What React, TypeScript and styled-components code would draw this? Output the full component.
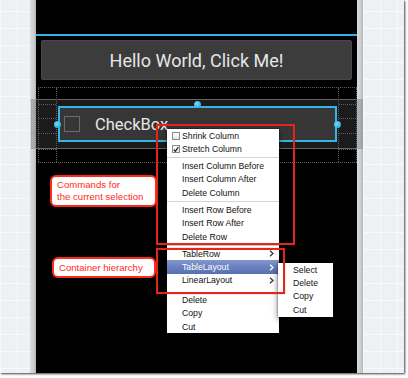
import React from "react";
import styled, { createGlobalStyle } from "styled-components";

const Global = createGlobalStyle`
  html, body { margin: 0; padding: 0; background: #ffffff; }
  #root { width: 408px; height: 378px; }
`;

const Frame = styled.div`
  position: relative;
  width: 404px;
  height: 373px;
  display: flex;
  box-shadow: 1px 1px 2px rgba(0, 0, 0, 0.75);
  overflow: hidden;
`;

const GridArea = styled.div<{ $w?: number }>`
  ${(p) => (p.$w ? `width: ${p.$w}px;` : "flex: 1;")}
  background-color: #edf1f4;
  background-image: linear-gradient(#f7f9fb 1px, transparent 1px),
    linear-gradient(90deg, #f7f9fb 1px, transparent 1px);
  background-size: 17px 17px;
  background-position: 0 -6px;
`;

const SideBar = styled.div`
  width: 6px;
  background: linear-gradient(90deg, #dadcde 0%, #cfd1d3 40%, #c4c6c8 80%, #a9abad 100%);
`;

const Screen = styled.div`
  width: 321px;
  background: #000;
  display: flex;
  flex-direction: column;
`;

const TopSpace = styled.div`
  height: 34px;
`;

const BlueLine = styled.div`
  height: 2px;
  background: #33b5e5;
`;

const DeviceButton = styled.div`
  margin: 4px 5px 0 5px;
  height: 40px;
  box-sizing: border-box;
  background: #3c3c3c;
  border: 1px solid #484848;
  border-radius: 2px;
  display: flex;
  align-items: center;
  justify-content: center;
  font-family: Roboto, "Liberation Sans", sans-serif;
  font-size: 18px;
  color: #e6e6e6;
`;

const CheckRow = styled.div`
  position: relative;
  z-index: 1;
  margin: 26px 20px 0 22px;
  height: 36px;
  box-sizing: border-box;
  border: 2px solid #33b5e5;
  background: #363636;
  display: flex;
  align-items: center;
  padding-left: 4px;
  gap: 15px;
`;

const DeviceBox = styled.div`
  width: 16px;
  height: 16px;
  box-sizing: border-box;
  border: 1.5px solid #6b6b6b;
`;

const DeviceLabel = styled.span`
  font-family: Roboto, "Liberation Sans", sans-serif;
  font-size: 16.5px;
  color: #e6e6e6;
`;

const RowBand = styled.div`
  position: absolute;
  left: 31px;
  top: 99px;
  width: 332px;
  height: 50px;
  box-sizing: border-box;
  background: rgba(90, 90, 90, 0.3);
  border: 1px solid rgba(160, 160, 160, 0.55);
`;

/* layout-editor guides: a table outline with cell guides */
const Guides = styled.div`
  position: absolute;
  left: 38px;
  top: 87px;
  width: 319px;
  height: 76px;
  box-sizing: border-box;
  border-top: 1px dotted #5e5e5e;
  border-bottom: 1px dotted #5e5e5e;
  display: flex;
  justify-content: space-between;
  pointer-events: none;
`;

const GuideCol = styled.div`
  width: 19px;
  box-sizing: border-box;
  border-left: 1px dotted #5e5e5e;
  border-right: 1px dotted #5e5e5e;
  display: flex;
  flex-direction: column;
`;

const GuideCell = styled.div<{ $h: number }>`
  height: ${(p) => p.$h}px;
  flex-shrink: 0;
  border-bottom: 1px dotted #5e5e5e;
`;

const Handle = styled.div<{ $x: number; $y: number }>`
  position: absolute;
  z-index: 2;
  left: ${(p) => p.$x - 3.5}px;
  top: ${(p) => p.$y - 3.5}px;
  width: 7px;
  height: 7px;
  border-radius: 50%;
  background: radial-gradient(circle at 40% 40%, #7fd4f5 0%, #33b5e5 60%, #1e8fc0 100%);
`;

const Menu = styled.div<{ $x: number; $y: number; $w: number }>`
  position: absolute;
  z-index: 3;
  left: ${(p) => p.$x}px;
  top: ${(p) => p.$y}px;
  width: ${(p) => p.$w}px;
  background: #ffffff;
  box-shadow: 0 2px 6px rgba(0, 0, 0, 0.55), 0 0 0 0.5px rgba(0, 0, 0, 0.3);
  font-family: "Liberation Sans", Arial, sans-serif;
  font-size: 8.7px;
  color: #111;
  display: flex;
  flex-direction: column;
`;

const Item = styled.div<{ $active?: boolean }>`
  position: relative;
  height: 13.4px;
  display: flex;
  align-items: center;
  padding-left: 15px;
  color: ${(p) => (p.$active ? "#fff" : "#111")};
  background: ${(p) =>
    p.$active ? "linear-gradient(#8497cd 0%, #6a80bf 50%, #5a6fb0 100%)" : "transparent"};
`;

const Sep = styled.div`
  height: 3.6px;
  display: flex;
  align-items: center;
  &::after {
    content: "";
    flex: 1;
    height: 1.5px;
    background: #d4d4d4;
  }
`;

const Gap = styled.div`
  height: 6px;
`;

const MiniBox = styled.span`
  position: absolute;
  left: 5px;
  top: 2.7px;
  width: 8px;
  height: 8px;
  box-sizing: border-box;
  border: 1px solid #8a8a8a;
  background: linear-gradient(#ffffff, #e6e6e6);
  display: flex;
  align-items: center;
  justify-content: center;
`;

const Arrow = styled.svg`
  position: absolute;
  right: 5px;
  top: 3.5px;
`;

const RedBox = styled.div<{ $x: number; $y: number; $w: number; $h: number }>`
  position: absolute;
  z-index: 4;
  left: ${(p) => p.$x}px;
  top: ${(p) => p.$y}px;
  width: ${(p) => p.$w}px;
  height: ${(p) => p.$h}px;
  box-sizing: border-box;
  border: 2px solid #e3261b;
  box-shadow: 0 0 1px rgba(120, 0, 0, 0.5);
`;

const Callout = styled.div<{ $x: number; $y: number; $w: number; $h: number }>`
  position: absolute;
  z-index: 4;
  left: ${(p) => p.$x}px;
  top: ${(p) => p.$y}px;
  width: ${(p) => p.$w}px;
  height: ${(p) => p.$h}px;
  box-sizing: border-box;
  border: 2.5px solid #ff2a1a;
  border-radius: 6px;
  background: #fff;
  box-shadow: 0 0 1px rgba(90, 0, 0, 0.7);
  padding-left: 5px;
  display: flex;
  flex-direction: column;
  justify-content: center;
  font-family: "Liberation Sans", Arial, sans-serif;
  font-size: 9.6px;
  line-height: 12px;
  color: #ff2a1a;
`;

const Chevron = ({ color }: { color: string }) => (
  <Arrow width="5" height="7" viewBox="0 0 5 7">
    <polyline points="1,0.8 4,3.5 1,6.2" fill="none" stroke={color} strokeWidth="1.2" />
  </Arrow>
);

const guideRows = [16, 13, 14, 15];

const GuideColumn = () => (
  <GuideCol>
    {guideRows.map((h, i) => (
      <GuideCell key={i} $h={h} />
    ))}
  </GuideCol>
);

export default function App() {
  return (
    <>
      <Global />
      <Frame>
        <GridArea $w={30} />
        <SideBar />
        <Screen>
          <TopSpace />
          <BlueLine />
          <DeviceButton>Hello World, Click Me!</DeviceButton>
          <CheckRow>
            <DeviceBox />
            <DeviceLabel>CheckBox</DeviceLabel>
          </CheckRow>
        </Screen>
        <SideBar />
        <GridArea />

        <RowBand />

        <Guides>
          <GuideColumn />
          <GuideColumn />
        </Guides>

        <Handle $x={197} $y={104} />
        <Handle $x={57} $y={124} />
        <Handle $x={337} $y={124} />

        <Menu $x={167} $y={129} $w={112}>
          <Item>
            <MiniBox />
            Shrink Column
          </Item>
          <Item>
            <MiniBox>
              <svg width="7" height="7" viewBox="0 0 7 7">
                <polyline points="1,3.6 2.8,5.6 6.2,0.6" fill="none" stroke="#111" strokeWidth="1.3" />
              </svg>
            </MiniBox>
            Stretch Column
          </Item>
          <Sep />
          <Item>Insert Column Before</Item>
          <Item>Insert Column After</Item>
          <Item>Delete Column</Item>
          <Sep />
          <Item>Insert Row Before</Item>
          <Item>Insert Row After</Item>
          <Item>Delete Row</Item>
          <Sep />
          <Item>
            TableRow
            <Chevron color="#333" />
          </Item>
          <Item $active>
            TableLayout
            <Chevron color="#fff" />
          </Item>
          <Item>
            LinearLayout
            <Chevron color="#333" />
          </Item>
          <Gap />
          <Item>Delete</Item>
          <Item>Copy</Item>
          <Item>Cut</Item>
        </Menu>

        <Menu $x={278} $y={263} $w={55}>
          <Item>Select</Item>
          <Item>Delete</Item>
          <Item>Copy</Item>
          <Item>Cut</Item>
        </Menu>

        <RedBox $x={156} $y={124} $w={139} $h={121} />
        <RedBox $x={156} $y={248} $w={129} $h={46} />

        <Callout $x={50} $y={175} $w={107} $h={32}>
          <span>Commands for</span>
          <span>the current selection</span>
        </Callout>
        <Callout $x={52} $y={257} $w={104} $h={21}>
          <span>Container hierarchy</span>
        </Callout>
      </Frame>
    </>
  );
}
